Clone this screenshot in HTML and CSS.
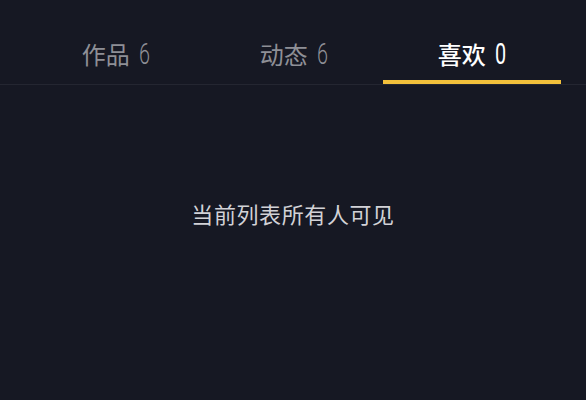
FILE: index.html
```html
<!DOCTYPE html>
<html lang="zh">
<head>
<meta charset="utf-8">
<link rel="stylesheet" href="styles.css">
</head>
<body>
<div class="tabs">
  <div class="tab"><span class="label">作品 <span class="num">6</span></span><span class="bar"></span></div>
  <div class="tab"><span class="label">动态 <span class="num">6</span></span><span class="bar"></span></div>
  <div class="tab active"><span class="label">喜欢 <span class="num">0</span></span><span class="bar"></span></div>
</div>
<div class="content">
  <p class="notice">当前列表所有人可见</p>
</div>
</body>
</html>
```
FILE: styles.css
```css
html, body {
  margin: 0;
  padding: 0;
  background: #161823;
  height: 100%;
}
body {
  font-family: "Noto Sans CJK SC", "Noto Sans", sans-serif;
}
.tabs {
  display: flex;
  height: 84px;
  padding: 0 25px 0 27px;
  border-bottom: 1px solid #242631;
}
.tab {
  flex: 1;
  display: flex;
  flex-direction: column;
  justify-content: flex-end;
  align-items: center;
}
.label {
  font-size: 24px;
  line-height: 30px;
  color: #8e8f96;
  margin-bottom: 11px;
  white-space: nowrap;
}
.num {
  display: inline-block;
  width: 11px;
  margin-left: 4px;
  font-family: "Roboto", "Noto Sans", sans-serif;
  font-size: 30px;
  line-height: 30px;
  font-weight: 300;
  transform: scaleX(0.66);
  transform-origin: left center;
}
.bar {
  align-self: stretch;
  height: 4px;
}
.tab.active .label {
  color: #ffffff;
  font-weight: 500;
}
.tab.active .num {
  font-weight: 400;
}
.tab.active .bar {
  background: #f2c03b;
}
.content {
  padding-top: 113px;
  display: flex;
  justify-content: center;
}
.notice {
  margin: 0;
  font-size: 22px;
  line-height: 30px;
  color: #d2d2d7;
  letter-spacing: 0.6px;
}
```
